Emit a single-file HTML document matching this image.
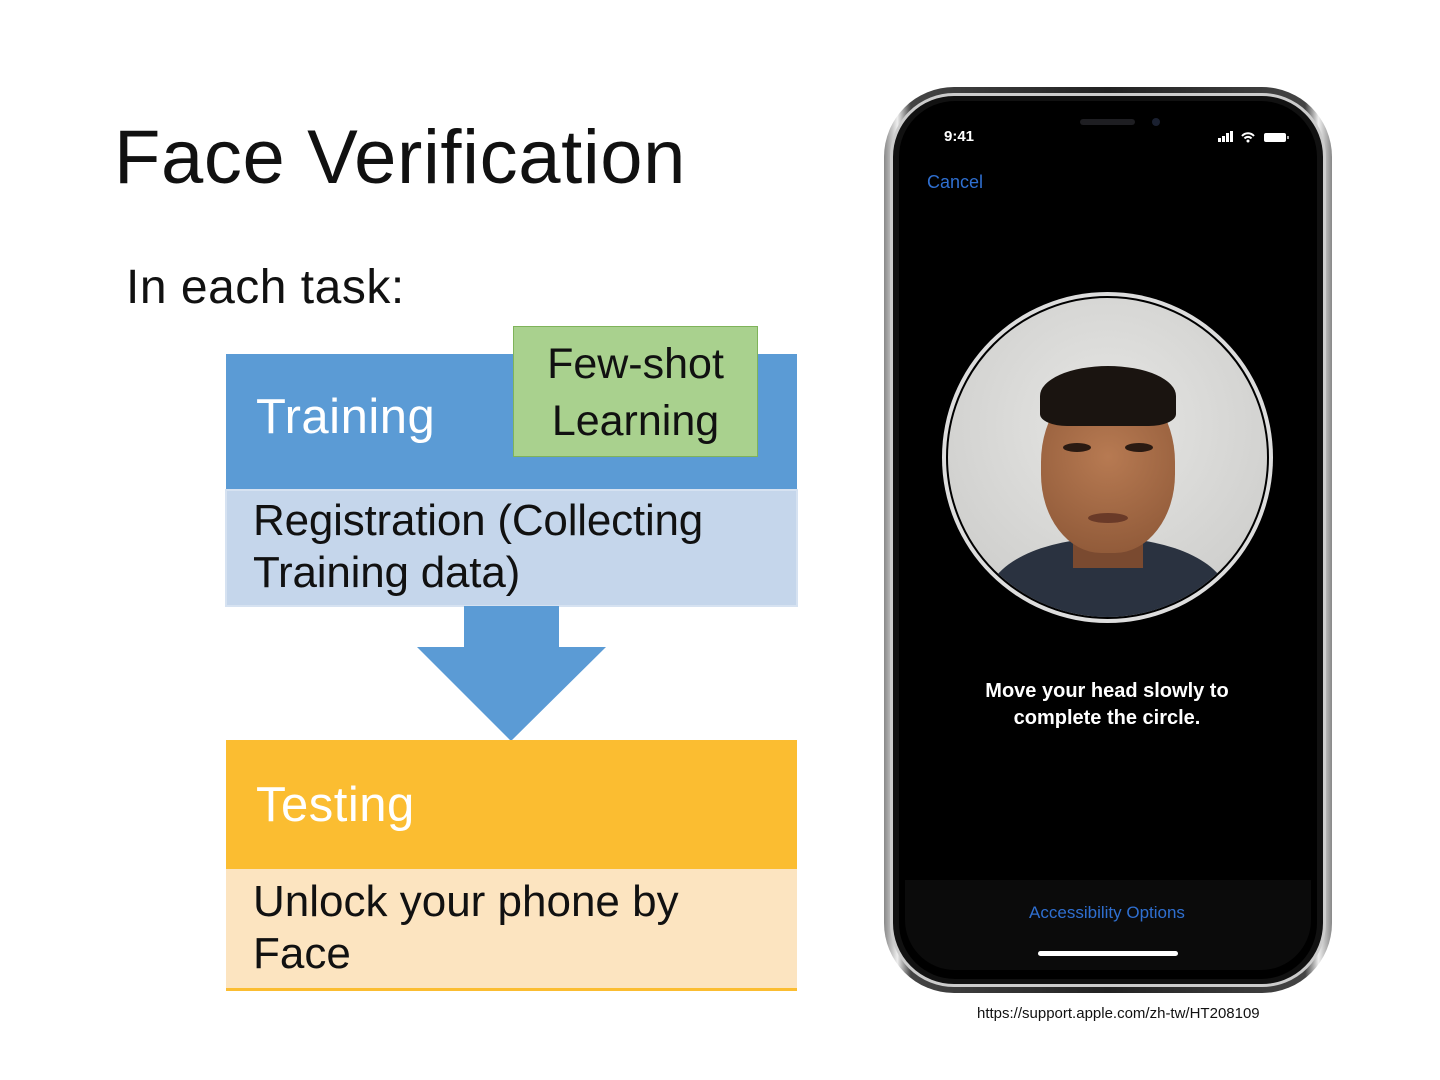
<!DOCTYPE html>
<html><head><meta charset="utf-8"><style>
*{margin:0;padding:0;box-sizing:border-box}
body{width:1440px;height:1080px;background:#fff;position:relative;overflow:hidden;font-family:"Liberation Sans",sans-serif}
.a{position:absolute}
.t{white-space:nowrap}
</style></head><body>
<div class="a t" style="left:114px;top:114px;font-size:76px;letter-spacing:0.6px;color:#111">Face Verification</div>
<div class="a t" style="left:126px;top:260px;font-size:48px;letter-spacing:0.5px;color:#111">In each task:</div>

<div class="a" style="left:226px;top:354px;width:571px;height:135px;background:#5B9BD5"></div>
<div class="a t" style="left:256px;top:389px;font-size:49px;color:#fff;letter-spacing:0.5px">Training</div>
<div class="a" style="left:513px;top:326px;width:245px;height:131px;background:#A9D18E;border:1px solid #7FB35A"></div>
<div class="a t" style="left:513px;top:336px;width:245px;text-align:center;font-size:43px;line-height:57px;color:#111;letter-spacing:0px">Few-shot<br>Learning</div>

<div class="a" style="left:225px;top:489px;width:573px;height:118px;background:#C5D6EB;border:2px solid #D6E2F1"></div>
<div class="a t" style="left:253px;top:495px;font-size:44px;line-height:52px;color:#111;letter-spacing:-0.2px">Registration (Collecting<br>Training data)</div>

<svg class="a" style="left:410px;top:606px" width="205" height="140"><polygon points="54,0 149,0 149,41 196,41 101,135 7,41 54,41" fill="#5B9BD5"/></svg>

<div class="a" style="left:226px;top:740px;width:571px;height:129px;background:#FBBD31"></div>
<div class="a t" style="left:256px;top:777px;font-size:49px;color:#fff;letter-spacing:0.5px">Testing</div>
<div class="a" style="left:226px;top:869px;width:571px;height:122px;background:#FCE4C0;border-bottom:3px solid #FBBD31"></div>
<div class="a t" style="left:253px;top:876px;font-size:44px;line-height:52px;color:#111;letter-spacing:0px">Unlock your phone by<br>Face</div>

<!-- phone -->
<div class="a" style="left:884px;top:87px;width:448px;height:906px;border-radius:70px;background:linear-gradient(90deg,#888,#eee 3%,#444 6%,#222 50%,#444 94%,#eee 97%,#888);"></div>
<div class="a" style="left:890px;top:93px;width:436px;height:894px;border-radius:64px;background:#111;border:3px solid #ccc"></div>
<div class="a" style="left:899px;top:101px;width:418px;height:878px;border-radius:56px;background:#000"></div>
<div class="a" style="left:1080px;top:119px;width:55px;height:6px;border-radius:3px;background:#1e1e22"></div>
<div class="a" style="left:1152px;top:118px;width:8px;height:8px;border-radius:50%;background:#1a2030"></div>
<div class="a t" style="left:944px;top:128px;font-size:15px;font-weight:bold;color:#fff">9:41</div>
<svg class="a" style="left:1218px;top:130px" width="72" height="14"><rect x="0" y="8" width="3" height="4" fill="#fff"/><rect x="4" y="6" width="3" height="6" fill="#fff"/><rect x="8" y="3" width="3" height="9" fill="#fff"/><rect x="12" y="1" width="3" height="11" fill="#fff"/><path d="M24 6 a8 8 0 0 1 12 0 M26.5 8.5 a4.5 4.5 0 0 1 7 0" stroke="#fff" stroke-width="2" fill="none"/><circle cx="30" cy="11" r="1.5" fill="#fff"/><rect x="46" y="3" width="22" height="9" rx="2" fill="#fff"/><rect x="69" y="6" width="2" height="3" fill="#aaa"/></svg>
<div class="a t" style="left:927px;top:172px;font-size:18px;color:#2F6FD0">Cancel</div>

<div class="a" style="left:942px;top:292px;width:331px;height:331px;border-radius:50%;background:#ddd;padding:4px">
<div style="width:100%;height:100%;border-radius:50%;border:2px solid #000;overflow:hidden;position:relative;background:radial-gradient(circle at 50% 40%,#e6e6e4,#c8c8c6)">
<div class="a" style="left:40px;top:240px;width:240px;height:120px;border-radius:50%;background:#2a3240"></div>
<div class="a" style="left:125px;top:190px;width:70px;height:80px;background:#7a4a30"></div>
<div class="a" style="left:93px;top:80px;width:134px;height:175px;border-radius:48% 48% 45% 45%;background:radial-gradient(circle at 50% 45%,#b77a52,#8a5535)"></div>
<div class="a" style="left:92px;top:68px;width:136px;height:60px;border-radius:50% 50% 20% 20%;background:#1a1410"></div>
<div class="a" style="left:115px;top:145px;width:28px;height:9px;border-radius:50%;background:#2a1a12"></div>
<div class="a" style="left:177px;top:145px;width:28px;height:9px;border-radius:50%;background:#2a1a12"></div>
<div class="a" style="left:140px;top:215px;width:40px;height:10px;border-radius:50%;background:#6a3a28"></div>
</div></div>

<div class="a t" style="left:900px;top:678px;width:414px;text-align:center;font-size:20px;line-height:27px;font-weight:bold;color:#fff">Move your head slowly to<br>complete the circle.</div>
<div class="a" style="left:905px;top:880px;width:406px;height:90px;background:#0b0b0b;border-radius:0 0 50px 50px"></div>
<div class="a t" style="left:900px;top:903px;width:414px;text-align:center;font-size:17px;color:#2F6FD0">Accessibility Options</div>
<div class="a" style="left:1038px;top:951px;width:140px;height:5px;border-radius:3px;background:#fff"></div>
<div class="a t" style="left:977px;top:1005px;font-size:15px;color:#111">https://support.apple.com/zh-tw/HT208109</div>
</body></html>
